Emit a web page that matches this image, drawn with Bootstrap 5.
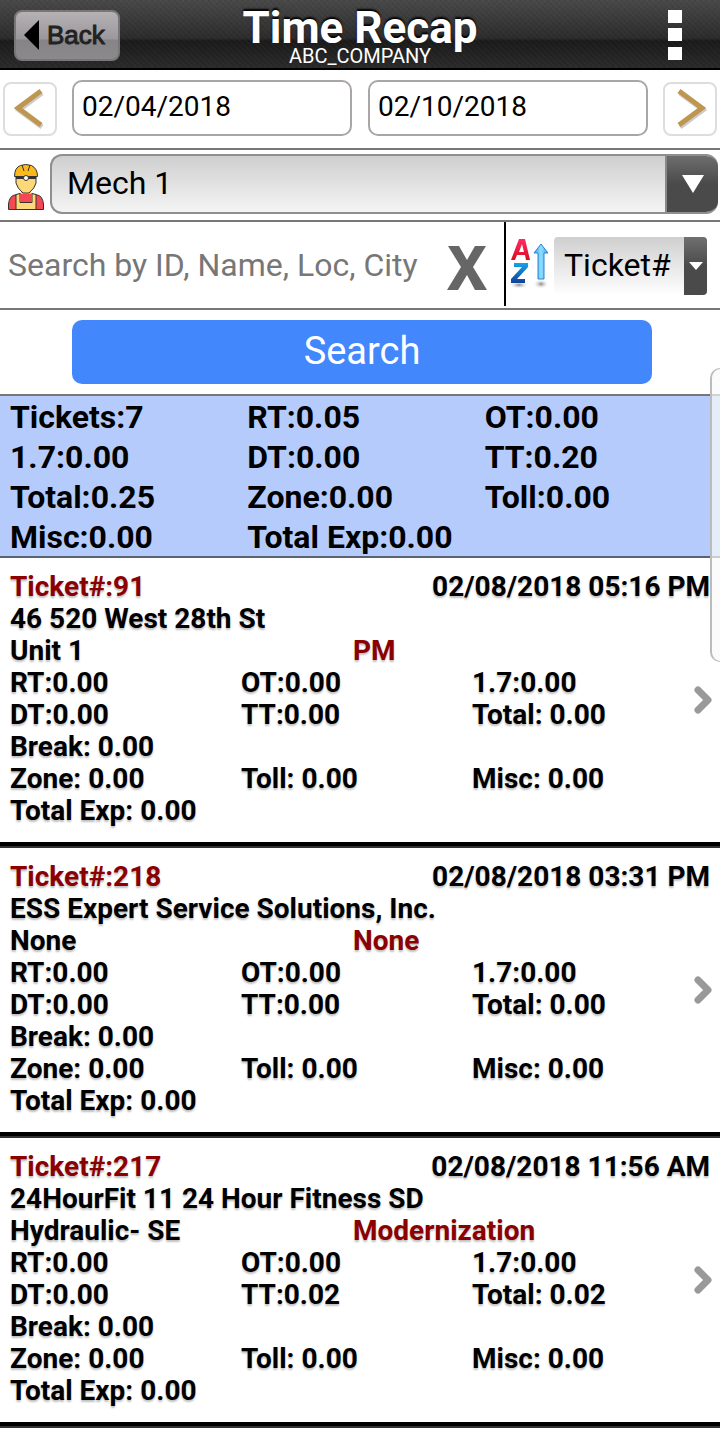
<!DOCTYPE html>
<html lang="en">
<head>
<meta charset="utf-8">
<meta name="viewport" content="width=device-width, initial-scale=1">
<title>Time Recap</title>
<link rel="stylesheet" href="https://cdn.jsdelivr.net/npm/bootstrap@5.3.0/dist/css/bootstrap.min.css">
<style>
body{font-family:Roboto,sans-serif;color:#000;background:#fff}
.topbar{height:70px;border-bottom:2px solid #000;background:
 repeating-linear-gradient(45deg,rgba(255,255,255,.02) 0 2px,transparent 2px 4px),
 repeating-linear-gradient(-45deg,rgba(0,0,0,.04) 0 2px,transparent 2px 4px),
 linear-gradient(#484848 0,#2b2b2b 38px,#1a1a1a 41px,#2a2a2a 68px)}
.topbar>.side{flex:1 1 0}
.titles h1{font-size:44px;line-height:46px;font-weight:700;text-shadow:0 -2px 2px #000}
.titles p{font-size:20px;line-height:18px;margin-top:-4px}
.titles{padding-top:2px}
.back-btn{width:106px;height:51px;margin:2px 0 0 14px;border:2px solid #777;border-radius:8px;background:linear-gradient(#b5b1b5,#9b989b 27px,#878487 28px,#8c898c);
 font:26px/40px "Liberation Sans",sans-serif;color:#222;-webkit-text-stroke:1px #222}
.menu-btn{margin:2px 32px 0 0}
.line{border-bottom:2px solid #777}
.dates{height:80px;padding:0 3px 12px}
.arrow-btn{flex-shrink:0;width:54px;height:54px;border:2px solid #ddd;border-radius:8px;background:#fff}
.date-box{height:56px;border:2px solid #aba6a6;border-radius:10px;font-size:28px;line-height:32px;padding:0 8px 4px;min-width:0;flex:1 1 0;color:#000}
.date-gap{gap:0 16px;padding:0 15px;min-width:0}
.mech{height:72px}
.pick{appearance:none;border:0;color:#000;background:none}
.mech-wrap{height:60px;margin:4px 2px 0 6px;border:2px solid #8f8f8f;border-width:2px 0 2px 2px;border-radius:12px;overflow:hidden;background:linear-gradient(#cfcfcf,#f4f4f4)}
.mech-wrap .pick{font-size:32px;line-height:40px;padding:0 15px 2px}
.drop{background:linear-gradient(#707070,#4a4a4a 50%);pointer-events:none}
.mech-wrap .drop{width:53px;margin:-2px 0;border-left:2px solid #888}
.filter{height:88px}
.query{border:0;font-size:32px;line-height:40px;padding:0 8px;min-width:0;color:#000}
.query::placeholder{color:#777;opacity:1}
.clear-btn{padding:6px 0 0}
.sorter{border-left:2px solid #000;height:84px;padding-right:13px}
.sort-wrap{width:153px;height:58px;margin-top:4px;border-radius:4px;overflow:hidden;background:linear-gradient(#cfcfcf,#fff)}
.sort-wrap .pick{font-size:32px;line-height:40px;padding:0 0 2px 10px;min-width:0}
.sort-wrap .drop{width:23px}
.go{padding:10px 68px 10px 72px}
.go-btn{height:64px;border:0;border-radius:10px;background:#4387fd;color:#fff;font-size:38px;line-height:48px;padding:0 0 2px}
.totals{background:#b5cbfb;border-bottom:2px solid #5a6372;font-size:32px;line-height:40px;font-weight:700;padding-left:10px;display:grid;grid-template-columns:repeat(3,minmax(0,1fr));column-gap:2px}
.totals>div{white-space:nowrap;padding-top:1px;height:40px}
.ticket{display:block;position:relative;color:#000;text-decoration:none;font-size:28px;line-height:32px;font-weight:700;padding:13px 10px 19px;
 text-shadow:0 2px 2px rgba(0,0,0,.25);border-bottom:2px solid #333;box-shadow:inset 0 -4px #000}
.third{width:33%;white-space:nowrap}
.half{width:49%;white-space:nowrap}
.dark-red{color:#8b0000}
.chev{position:absolute;right:6px;top:50%;margin-top:-17px}
.edge{position:absolute;right:0;top:368px;width:10px;height:294px;border:2px solid #bbb;border-width:1px 0 1px 2px;border-radius:12px 0 0 12px;background:rgba(250,250,250,.7)}
</style>
</head>
<body class="position-relative">
<header class="topbar d-flex align-items-center">
  <div class="side"><button class="back-btn d-flex align-items-center p-0 ps-2 gap-2" type="button"><svg width="15" height="30" viewBox="0 0 15 30"><path d="M15 0v30L0 15z" fill="#000"/></svg>Back</button></div>
  <div class="titles text-center text-white"><h1 class="mb-0">Time Recap</h1><p class="mb-0">ABC_COMPANY</p></div>
  <div class="side d-flex justify-content-end"><button class="menu-btn border-0 bg-transparent p-0" type="button" aria-label="Menu"><svg class="d-block" width="26" height="52" viewBox="0 0 26 52"><path d="M6 1h14v13H6zM6 19h14v13H6zM6 38h14v13H6z" fill="#fff"/></svg></button></div>
</header>
<main>
<section class="dates line d-flex align-items-end">
  <button class="arrow-btn p-0" type="button" aria-label="Previous week"><svg class="d-block" width="50" height="50" viewBox="0 0 50 50"><path d="M36 7L13 24l23 17" transform="translate(1 2)" fill="none" stroke="#ccc" stroke-width="5"/><path d="M36 7L13 24l23 17" fill="none" stroke="#bf964f" stroke-width="5"/></svg></button>
  <div class="date-gap d-flex flex-grow-1">
    <input class="date-box" type="text" value="02/04/2018" aria-label="From date">
    <input class="date-box" type="text" value="02/10/2018" aria-label="To date">
  </div>
  <button class="arrow-btn p-0" type="button" aria-label="Next week"><svg class="d-block" width="50" height="50" viewBox="0 0 50 50"><path d="M14 7l23 17-23 17" transform="translate(1 2)" fill="none" stroke="#ccc" stroke-width="5"/><path d="M14 7l23 17-23 17" fill="none" stroke="#bf964f" stroke-width="5"/></svg></button>
</section>
<section class="mech line d-flex">
  <svg class="flex-shrink-0 ms-2 mt-2" width="36" height="56" viewBox="0 0 36 56"><g stroke="#333" stroke-width="1"><path d="M.5 51.500V46q1-8 6-9l6-1h11l6 1q5 1 6 9v5.500z" fill="#f44950"/><path d="M8 36.500v15h20v-15l-4-1v9H12v-9z" fill="#fdd878"/><path d="M12 36h12v8H12z" fill="#f44950" stroke="none"/><path d="M13 30h10v6H13z" fill="#f2c167" stroke="none"/><path d="M8 18h20v7q-1 5-7 10h-6Q9 30 8 25z" fill="#fdd878"/><path d="M6.500 18.500q0-9 6-11 5-2 11 0 6 3 6 11z" fill="#fbb91b"/><path d="M16 13l-2-6M20 13l2-6" fill="none"/><path d="M8 20h20" stroke-width="2"/><circle cx="18" cy="20" r="2.500" fill="#fff"/></g></svg>
  <div class="mech-wrap flex-grow-1 d-flex">
    <select class="pick flex-grow-1" aria-label="Mechanic"><option>Mech 1</option></select>
    <span class="drop d-flex align-items-center justify-content-center"><svg width="22" height="18" viewBox="0 0 22 18"><path d="M0 0h22L11 18z" fill="#fff"/></svg></span>
  </div>
</section>
<section class="filter line d-flex">
  <input class="query flex-grow-1" type="text" placeholder="Search by ID, Name, Loc, City" aria-label="Search by ID, Name, Loc, City">
  <button class="clear-btn border-0 bg-transparent me-3" type="button" aria-label="Clear"><svg class="d-block" width="42" height="46" viewBox="0 0 42 46"><path d="M2 1h11l8 14 8-14h11L27 22l14 23H29l-8-15-9 15H1l14-23z" fill="#666"/></svg></button>
  <div class="sorter d-flex align-items-center gap-1 ps-1">
    <svg width="40" height="50" viewBox="0 0 40 50"><defs><linearGradient id="red" y2="1" x2="0"><stop stop-color="#ff2a68"/><stop offset="1" stop-color="#d80f1d"/></linearGradient><linearGradient id="blue" y2="1" x2="0"><stop stop-color="#14a5e8"/><stop offset="1" stop-color="#123f9b"/></linearGradient><linearGradient id="sky"><stop stop-color="#3f9ff0"/><stop offset=".5" stop-color="#8fe0ff"/><stop offset="1" stop-color="#3f9ff0"/></linearGradient><radialGradient id="shade"><stop stop-color="#888"/><stop offset="1" stop-color="#fff" stop-opacity="0"/></radialGradient></defs><ellipse cx="9" cy="46" rx="10" ry="4" fill="url(#shade)"/><ellipse cx="31" cy="45" rx="8" ry="5" fill="url(#shade)"/><path d="M1 21L9 0h6l5 21h-4l-1-5H7l-2 5zm8-8h5l-2-8z" fill="url(#red)" fill-rule="evenodd"/><path d="M4 24h14v4L7 40h8v4H1v-4l11-12H4z" fill="url(#blue)"/><path d="M31 5l7 9h-4v26h-6V14h-4z" fill="url(#sky)" stroke="#2c84d2"/></svg>
    <div class="sort-wrap d-flex">
      <select class="pick flex-grow-1" aria-label="Sort by"><option>Ticket#</option></select>
      <span class="drop d-flex align-items-center justify-content-center"><svg width="14" height="8" viewBox="0 0 14 8"><path d="M0 0h14L7 8z" fill="#fff"/></svg></span>
    </div>
  </div>
</section>
<div class="go line"><button class="go-btn w-100" type="button">Search</button></div>
<section class="totals">
  <div>Tickets:7</div><div>RT:0.05</div><div>OT:0.00</div>
  <div>1.7:0.00</div><div>DT:0.00</div><div>TT:0.20</div>
  <div>Total:0.25</div><div>Zone:0.00</div><div>Toll:0.00</div>
  <div>Misc:0.00</div><div>Total Exp:0.00</div>
</section>
<a class="ticket" href="#91">
  <div class="d-flex justify-content-between"><span class="dark-red">Ticket#:91</span><span>02/08/2018 05:16 PM</span></div>
  <div>46 520 West 28th St</div>
  <div class="d-flex"><span class="half">Unit 1</span><span class="dark-red">PM</span></div>
  <div class="d-flex"><span class="third">RT:0.00</span><span class="third">OT:0.00</span><span class="third">1.7:0.00</span></div>
  <div class="d-flex"><span class="third">DT:0.00</span><span class="third">TT:0.00</span><span class="third">Total: 0.00</span></div>
  <div>Break: 0.00</div>
  <div class="d-flex"><span class="third">Zone: 0.00</span><span class="third">Toll: 0.00</span><span class="third">Misc: 0.00</span></div>
  <div>Total Exp: 0.00</div>
  <svg class="chev" width="20" height="30" viewBox="0 0 20 30"><path d="M4 5l10 10L4 25" fill="none" stroke="#999" stroke-width="7" stroke-linecap="round" stroke-linejoin="round"/></svg>
</a>
<a class="ticket" href="#218">
  <div class="d-flex justify-content-between"><span class="dark-red">Ticket#:218</span><span>02/08/2018 03:31 PM</span></div>
  <div>ESS Expert Service Solutions, Inc.</div>
  <div class="d-flex"><span class="half">None</span><span class="dark-red">None</span></div>
  <div class="d-flex"><span class="third">RT:0.00</span><span class="third">OT:0.00</span><span class="third">1.7:0.00</span></div>
  <div class="d-flex"><span class="third">DT:0.00</span><span class="third">TT:0.00</span><span class="third">Total: 0.00</span></div>
  <div>Break: 0.00</div>
  <div class="d-flex"><span class="third">Zone: 0.00</span><span class="third">Toll: 0.00</span><span class="third">Misc: 0.00</span></div>
  <div>Total Exp: 0.00</div>
  <svg class="chev" width="20" height="30" viewBox="0 0 20 30"><path d="M4 5l10 10L4 25" fill="none" stroke="#999" stroke-width="7" stroke-linecap="round" stroke-linejoin="round"/></svg>
</a>
<a class="ticket" href="#217">
  <div class="d-flex justify-content-between"><span class="dark-red">Ticket#:217</span><span>02/08/2018 11:56 AM</span></div>
  <div>24HourFit 11 24 Hour Fitness SD</div>
  <div class="d-flex"><span class="half">Hydraulic- SE</span><span class="dark-red">Modernization</span></div>
  <div class="d-flex"><span class="third">RT:0.00</span><span class="third">OT:0.00</span><span class="third">1.7:0.00</span></div>
  <div class="d-flex"><span class="third">DT:0.00</span><span class="third">TT:0.02</span><span class="third">Total: 0.02</span></div>
  <div>Break: 0.00</div>
  <div class="d-flex"><span class="third">Zone: 0.00</span><span class="third">Toll: 0.00</span><span class="third">Misc: 0.00</span></div>
  <div>Total Exp: 0.00</div>
  <svg class="chev" width="20" height="30" viewBox="0 0 20 30"><path d="M4 5l10 10L4 25" fill="none" stroke="#999" stroke-width="7" stroke-linecap="round" stroke-linejoin="round"/></svg>
</a>
</main>
<div class="edge"></div>
<script src="https://cdn.jsdelivr.net/npm/bootstrap@5.3.0/dist/js/bootstrap.bundle.min.js"></script>
</body>
</html>
